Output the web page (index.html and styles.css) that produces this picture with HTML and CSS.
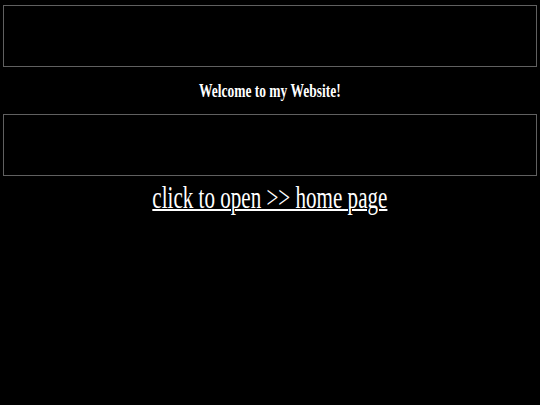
FILE: index.html
```html
<!DOCTYPE html>
<html>
<head>
<meta charset="utf-8">
<link rel="stylesheet" href="styles.css">
</head>
<body>
<div class="box"></div>
<h1 class="title"><span class="squeeze">Welcome to my Website!</span></h1>
<div class="box"></div>
<p class="link-row"><a class="link" href="#">click to open &gt;&gt; home page</a></p>
</body>
</html>
```
FILE: styles.css
```css
html, body {
  background: #000;
}
body {
  margin: 5px 3px 0 3px;
  font-family: "Liberation Serif", "Times New Roman", serif;
  color: #fff;
}
.box {
  height: 60px;
  border: 1px solid #606060;
}
.title {
  margin: 0;
  height: 47px;
  display: flex;
  align-items: center;
  justify-content: center;
  font-size: 19px;
  font-weight: bold;
}
.squeeze {
  display: inline-block;
  transform: scaleX(0.71);
}
.link-row {
  margin: 0;
  text-align: center;
  padding-top: 4px;
}
.link {
  display: inline-block;
  color: #fff;
  font-size: 31px;
  transform: scaleX(0.68);
  text-decoration: underline;
  text-decoration-thickness: 2px;
}
```
